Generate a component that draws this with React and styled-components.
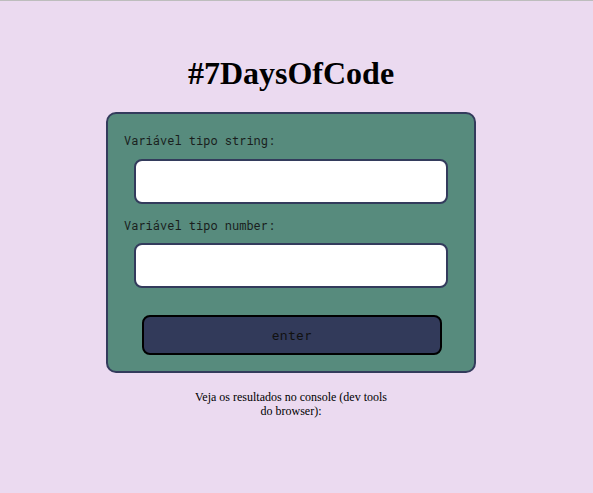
import React from "react";
import styled, { createGlobalStyle } from "styled-components";

const Global = createGlobalStyle`
  html, body { margin: 0; padding: 0; }
  body {
    background: #ebdaf0;
    border-top: 1px solid #bdbdbd;
    min-height: 492px;
    font-family: "Liberation Serif", "Times New Roman", serif;
  }
`;

const Page = styled.main`
  display: flex;
  flex-direction: column;
  align-items: center;
  padding: 0 11px 0 0;
`;

const Title = styled.h1`
  margin: 54px 0 0;
  font-family: "Liberation Serif", "Times New Roman", serif;
  font-size: 32px;
  font-weight: 700;
  color: #000;
  line-height: 37px;
`;

const Card = styled.form`
  box-sizing: border-box;
  width: 370px;
  margin-top: 20px;
  padding: 19px 16px 16px;
  background: #578b7d;
  border: 2px solid #333b5c;
  border-radius: 10px;
  display: flex;
  flex-direction: column;
`;

const Label = styled.label`
  font-family: "Roboto Mono", "Liberation Mono", "DejaVu Sans Mono", monospace;
  font-size: 12px;
  line-height: 14px;
  color: #1a1f1d;
  margin-top: ${(p) => p.$top || 0}px;
`;

const Input = styled.input`
  box-sizing: border-box;
  width: 314px;
  height: 45px;
  margin: ${(p) => p.$top}px 0 0 10px;
  background: #fff;
  border: 2px solid #333b5c;
  border-radius: 8px;
  outline: none;
`;

const Button = styled.button`
  box-sizing: border-box;
  width: 300px;
  height: 40px;
  margin: 27px 0 0 18px;
  background: #323a5a;
  border: 2px solid #000;
  border-radius: 8px;
  font-family: "Roboto Mono", "Liberation Mono", "DejaVu Sans Mono", monospace;
  font-size: 13px;
  color: #111;
  letter-spacing: 0.3px;
`;

const Note = styled.p`
  margin: 17px 0 0;
  max-width: 200px;
  text-align: center;
  font-size: 12px;
  line-height: 14px;
  color: #000;
`;

export default function App() {
  return (
    <>
      <Global />
      <Page>
        <Title>#7DaysOfCode</Title>
        <Card onSubmit={(e) => e.preventDefault()}>
          <Label>Variável tipo string:</Label>
          <Input type="text" $top={12} />
          <Label $top={14}>Variável tipo number:</Label>
          <Input type="number" $top={11} />
          <Button type="submit">enter</Button>
        </Card>
        <Note>Veja os resultados no console (dev tools do browser):</Note>
      </Page>
    </>
  );
}
